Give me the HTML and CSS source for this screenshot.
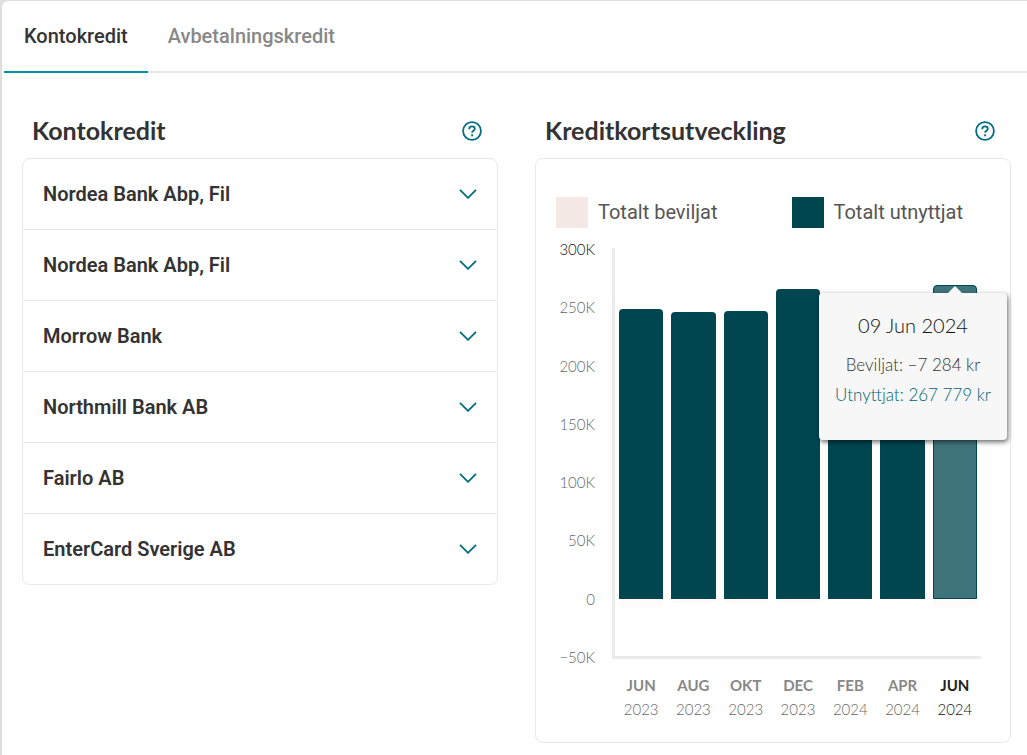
FILE: index.html
```html
<!DOCTYPE html>
<html lang="sv">
<head>
<meta charset="utf-8">
<meta name="viewport" content="width=device-width, initial-scale=1">
<title>Kontokredit</title>
<link rel="stylesheet" href="styles.css">
</head>
<body>
<svg class="sprite" aria-hidden="true">
  <symbol id="help" viewBox="0 0 20 20">
    <circle cx="10" cy="10" r="8.9"/>
    <path d="M7.2 8.2C7.2 6.3 8.3 5.3 10 5.3s2.8 1 2.8 2.5c0 2-2.7 2-2.7 4M10.1 13.3v2"/>
  </symbol>
  <symbol id="chevron" viewBox="0 0 18 10">
    <path d="M1 .8l8 8 8-8"/>
  </symbol>
</svg>
<main class="panel">
  <div class="tabs" role="tablist">
    <button class="tab tab-active" role="tab" aria-selected="true">Kontokredit</button>
    <button class="tab" role="tab" aria-selected="false">Avbetalningskredit</button>
  </div>
  <div class="content">
    <section>
      <header class="section-head">
        <h2>Kontokredit</h2>
        <button class="help" aria-label="Hjälp om kontokredit"><svg><use href="#help"/></svg></button>
      </header>
      <div class="card">
        <button class="account">Nordea Bank Abp, Fil<svg><use href="#chevron"/></svg></button>
        <button class="account">Nordea Bank Abp, Fil<svg><use href="#chevron"/></svg></button>
        <button class="account">Morrow Bank<svg><use href="#chevron"/></svg></button>
        <button class="account">Northmill Bank AB<svg><use href="#chevron"/></svg></button>
        <button class="account">Fairlo AB<svg><use href="#chevron"/></svg></button>
        <button class="account">EnterCard Sverige AB<svg><use href="#chevron"/></svg></button>
      </div>
    </section>
    <section>
      <header class="section-head">
        <h2>Kreditkortsutveckling</h2>
        <button class="help" aria-label="Hjälp om kreditkortsutveckling"><svg><use href="#help"/></svg></button>
      </header>
      <div class="card chart-card">
        <div class="legend">
          <span class="legend-item"><i class="swatch swatch-granted"></i>Totalt beviljat</span>
          <span class="legend-item"><i class="swatch swatch-used"></i>Totalt utnyttjat</span>
        </div>
        <div class="chart">
          <div class="y-axis">
            <span class="current">300K</span><span>250K</span><span>200K</span><span>150K</span><span>100K</span><span>50K</span><span>0</span><span>−50K</span>
          </div>
          <div class="plot">
            <div class="month"><div class="above"><div class="bar" style="height:83%"></div></div><div class="below" style="height:8px"></div></div>
            <div class="month"><div class="above"><div class="bar" style="height:82%"></div></div><div class="below" style="height:4px"></div></div>
            <div class="month"><div class="above"><div class="bar" style="height:82.3%"></div></div><div class="below" style="height:5px"></div></div>
            <div class="month"><div class="above"><div class="bar" style="height:88.7%"></div></div><div class="below" style="height:4px"></div></div>
            <div class="month"><div class="above"><div class="bar" style="height:85%"></div></div></div>
            <div class="month"><div class="above"><div class="bar" style="height:85%"></div></div></div>
            <div class="month"><div class="above"><div class="bar bar-active" style="height:89.6%"></div></div><div class="below" style="height:8px"></div>
              <div class="tooltip" role="tooltip">
                <p class="tooltip-date">09 Jun 2024</p>
                <p>Beviljat: −7 284 kr</p>
                <p class="tooltip-used">Utnyttjat: 267 779 kr</p>
              </div>
            </div>
          </div>
          <div class="x-axis">
            <span><b>JUN</b>2023</span><span><b>AUG</b>2023</span><span><b>OKT</b>2023</span><span><b>DEC</b>2023</span><span><b>FEB</b>2024</span><span><b>APR</b>2024</span><span class="current"><b>JUN</b>2024</span>
          </div>
        </div>
      </div>
    </section>
  </div>
</main>
</body>
</html>
```
FILE: styles.css
```css
* { box-sizing: border-box; }
body { margin: 0; background: #dfdfdf; font-family: Roboto, sans-serif; font-size: 20px; color: #333; }
button { font: inherit; color: inherit; background: none; border: 0; padding: 0; cursor: pointer; }
h2, p { margin: 0; }
.sprite { display: none; }
.panel { margin: 1px 0 0 2px; padding-left: 2px; min-height: calc(100vh - 1px); background: #fff; border-radius: 6px 0 0 0; }

.tabs { display: flex; height: 72px; border-bottom: 2px solid #e8e8e8; }
.tab { height: 72px; padding: 0 20px; font-weight: 500; line-height: 68px; color: #888; border-bottom: 2px solid transparent; }
.tab-active { color: #333; border-color: #0092aa; }

.content { display: grid; grid-template-columns: 1fr 1fr; gap: 37px; align-items: start; padding: 42px 16px 12px 18px; }
.section-head { display: flex; align-items: center; justify-content: space-between; height: 43px; padding: 0 16px 11px 10px; }
h2 { padding-bottom: 2px; font-family: Lato, sans-serif; font-size: 25px; line-height: 30px; font-weight: 700; }
.help { display: flex; }
.help svg { width: 20px; height: 20px; }
svg { fill: none; stroke: #006d80; stroke-width: 1.8; }

.card { border: 1px solid #e8e8e8; border-radius: 8px; }
.account { display: flex; align-items: center; justify-content: space-between; width: 100%; height: 71px; padding: 0 20px; font-weight: 600; text-align: left; border-bottom: 1px solid #e8e8e8; }
.account:last-child { height: 70px; border-bottom: 0; }
.account svg { width: 18px; height: 10px; }

.chart-card { padding: 38px 29px 21px 20px; }
.legend { display: flex; gap: 74px; color: #555; line-height: 31px; }
.legend-item { display: flex; align-items: center; gap: 10px; white-space: nowrap; }
.swatch { width: 32px; height: 31px; }
.swatch-granted { background: #f4e9e4; }
.swatch-used { background: #004651; }

.chart { display: grid; grid-template-columns: 39px 1fr; column-gap: 17px; margin-top: 20px; font-family: Lato, sans-serif; font-size: 15px; font-weight: 300; color: #666; }
.y-axis { display: flex; flex-direction: column; justify-content: space-between; height: 428px; margin: -9px 0; line-height: 20px; text-align: right; }
.current { color: #111; }
.plot { display: grid; grid-template-columns: repeat(7, 1fr); height: 411px; border: solid #ebebeb; border-width: 0 0 3px 3px; }
.month { position: relative; height: 100%; padding: 0 4px; }
.above { display: flex; align-items: flex-end; height: 350px; margin-top: 1px; }
.bar { width: 100%; background: #004651; border-radius: 4px 4px 0 0; }
.bar-active { background: #40747d; border: 1px solid #004651; }
.below { background: #fdfaf8; border-radius: 0 0 4px 4px; }
.x-axis { grid-column: 2; display: grid; grid-template-columns: repeat(7, 1fr); padding: 14px 0 0 3px; line-height: 24px; text-align: center; }
.x-axis b { display: block; font-weight: 700; color: #888; }
.x-axis .current b { color: #222; }

.tooltip { position: absolute; top: 45px; right: -26px; width: 188px; height: 147px; padding-top: 17px; background: #f7f7f7; border-radius: 4px; box-shadow: 1px 2px 5px rgba(0, 0, 0, .6); color: #333; font-size: 17px; line-height: 30px; text-align: center; white-space: nowrap; }
.tooltip::before { content: ""; position: absolute; top: -7px; right: 44px; border: solid transparent; border-width: 0 8px 8px; border-bottom-color: #f7f7f7; }
.tooltip-date { padding-bottom: 10px; font-size: 20px; color: #111; }
.tooltip-used { color: #006375; }
```
